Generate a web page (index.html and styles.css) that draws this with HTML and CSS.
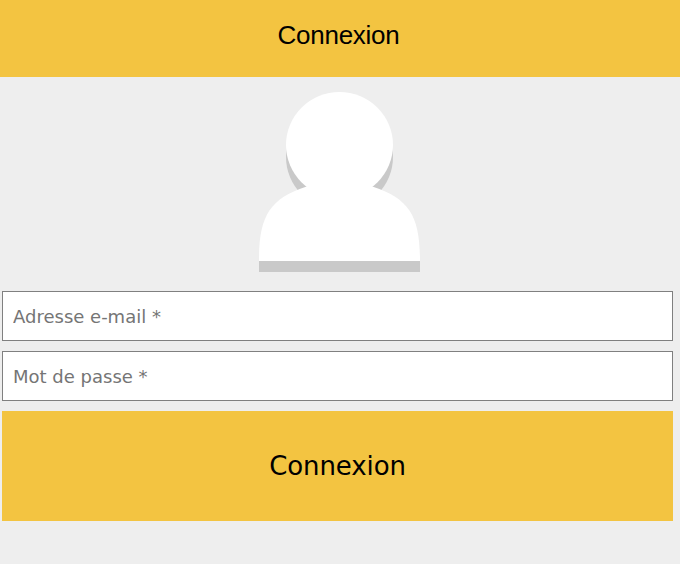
FILE: index.html
```html
<!DOCTYPE html>
<html lang="fr">
<head>
<meta charset="utf-8">
<title>Connexion</title>
<link rel="stylesheet" href="styles.css">
</head>
<body>
<header class="topbar"><h1 class="title">Connexion</h1></header>
<main class="login">
<svg class="avatar" width="161" height="180" viewBox="0 0 161 180" aria-hidden="true">
<g fill="#c9c9c9"><ellipse cx="80.500" cy="65" rx="53.500" ry="53"/><rect y="169" width="161" height="11"/></g>
<g fill="#fff"><ellipse cx="80.500" cy="53" rx="53.500" ry="53"/><path d="M0 169C0 125 10 107 47 94.800L80 80L114 94.800C151 107 161 125 161 169Z"/></g>
</svg>
<form class="form">
<input class="field" type="email" placeholder="Adresse e-mail *">
<input class="field" type="password" placeholder="Mot de passe *">
<button class="submit" type="button">Connexion</button>
</form>
</main>
</body>
</html>
```

FILE: styles.css
```css
* { box-sizing: border-box; }
body { margin: 0; min-height: 100vh; background: #eee; font-family: "Liberation Sans", Arial, sans-serif; }
.topbar { height: 77px; padding: 20px 3px 0 0; background: #f3c441; text-align: center; }
.title { margin: 0; font-size: 26px; line-height: 30px; font-weight: 400; letter-spacing: -0.25px; }
.avatar { display: block; margin: 15px auto 19px 259px; }
.form { display: flex; flex-direction: column; gap: 10px; margin: 0 7px 0 2px; }
.field { width: 100%; height: 50px; margin: 0; padding: 1px 10px; border: 1px solid #808080; border-radius: 0; background: #fff; font: 18px "DejaVu Sans", sans-serif; }
.field::placeholder { color: #757575; }
.submit { height: 110px; padding: 0; border: 0; background: #f3c441; color: #000; font: 26px "DejaVu Sans", sans-serif; letter-spacing: -0.1px; }
```
